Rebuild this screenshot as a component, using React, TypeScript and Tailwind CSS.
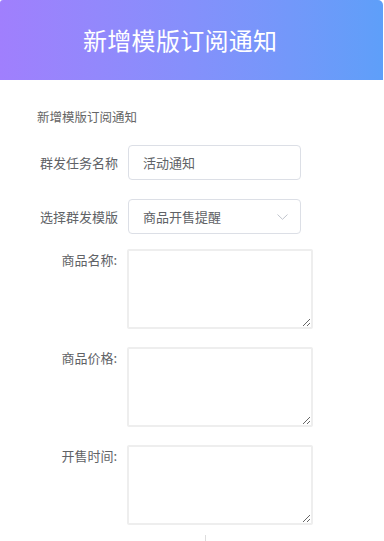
import { useState } from 'react';

const font = { fontFamily: '"Noto Sans CJK SC", "Noto Sans", sans-serif' };

const App = () => {
    const [taskName, setTaskName] = useState('活动通知');
    const [fields, setFields] = useState({ name: '', price: '', time: '' });

    const areas = [
        { key: 'name', label: '商品名称:' },
        { key: 'price', label: '商品价格:' },
        { key: 'time', label: '开售时间:' },
    ] as const;

    return (
        <div className="w-[384px] h-[541px] bg-white overflow-hidden" style={font}>
            {/* Header */}
            <div className="w-[383px] h-[80px] rounded-tr-[5px] rounded-tl-[3px] bg-gradient-to-r from-[#a07ffd] to-[#5e9ff9] flex items-center pl-[83px]">
                <h1 className="text-white text-[24px] leading-none font-normal tracking-[0.3px]">新增模版订阅通知</h1>
            </div>

            <div className="pt-[107px] -mt-[80px]">
                <div className="pl-[37px] text-[12.5px] leading-[20px] text-[#666]">新增模版订阅通知</div>

                {/* Task name */}
                <div className="flex items-center mt-[18px]">
                    <label className="w-[118px] text-right pr-0 text-[13px] text-[#606266]">群发任务名称</label>
                    <input
                        value={taskName}
                        onChange={(e) => setTaskName(e.target.value)}
                        className="ml-[10px] w-[173px] h-[35px] border border-[#dcdfe6] rounded-[4px] px-[14px] text-[13px] text-[#606266] outline-none"
                    />
                </div>

                {/* Template select */}
                <div className="flex items-center mt-[19px]">
                    <label className="w-[118px] text-right text-[13px] text-[#606266]">选择群发模版</label>
                    <div className="ml-[10px] w-[173px] h-[35px] border border-[#dcdfe6] rounded-[4px] pl-[14px] pr-[12px] flex items-center justify-between">
                        <span className="text-[13px] text-[#606266]">商品开售提醒</span>
                        <svg width="11" height="6" viewBox="0 0 11 6" fill="none">
                            <path d="M0.5 0.5 L5.5 5.3 L10.5 0.5" stroke="#c0c4cc" strokeWidth="1" />
                        </svg>
                    </div>
                </div>

                {/* Textareas */}
                <div className="flex flex-col gap-[18px] mt-[15px]">
                    {areas.map((a) => (
                        <div key={a.key} className="flex items-start">
                            <label className="w-[117px] text-right text-[13px] leading-[18px] text-[#606266] pt-[2px]">{a.label}</label>
                            <textarea
                                value={fields[a.key]}
                                onChange={(e) => setFields({ ...fields, [a.key]: e.target.value })}
                                className="ml-[10px] w-[186px] h-[80px] border-2 border-[#eeeeee] rounded-[2px] text-[13px] outline-none"
                            />
                        </div>
                    ))}
                </div>

                <div className="ml-[205px] mt-[10px] w-px h-[8px] bg-[#dddddd]" />
            </div>
        </div>
    );
};

export default App;
